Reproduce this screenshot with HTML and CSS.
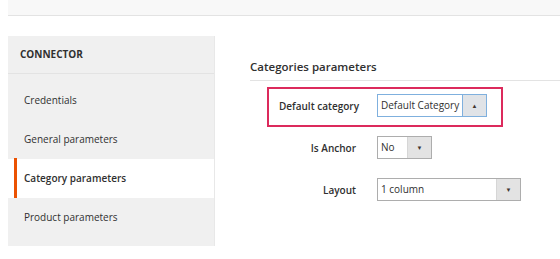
FILE: index.html
```html
<!DOCTYPE html>
<html lang="en">
<head>
    <meta charset="UTF-8">
    <meta name="viewport" content="width=device-width, initial-scale=1.0">
    <title>Connector - Categories parameters</title>
    <link rel="stylesheet" href="styles.css">
</head>
<body>
    <div class="page-top"></div>

    <div class="page-main">
        <nav class="side-nav">
            <div class="side-nav-title">CONNECTOR</div>
            <ul class="side-nav-list">
                <li class="side-nav-item">Credentials</li>
                <li class="side-nav-item">General parameters</li>
                <li class="side-nav-item active">Category parameters</li>
                <li class="side-nav-item">Product parameters</li>
            </ul>
        </nav>

        <section class="config">
            <h2 class="config-title">Categories parameters</h2>

            <div class="field-list">
                <div class="field highlight">
                    <label class="field-label">Default category</label>
                    <div class="select select-md open">
                        <span class="select-value">Default Category</span>
                        <span class="select-toggle">&#9650;</span>
                    </div>
                </div>

                <div class="field">
                    <label class="field-label">Is Anchor</label>
                    <div class="select select-sm">
                        <span class="select-value">No</span>
                        <span class="select-toggle">&#9660;</span>
                    </div>
                </div>

                <div class="field">
                    <label class="field-label">Layout</label>
                    <div class="select select-lg">
                        <span class="select-value">1 column</span>
                        <span class="select-toggle">&#9660;</span>
                    </div>
                </div>
            </div>
        </section>
    </div>
</body>
</html>
```

FILE: styles.css
```css
* {
    margin: 0;
    padding: 0;
    box-sizing: border-box;
}

body {
    margin: 0 0 0 8px;
    font-family: "Open Sans", "Liberation Sans", sans-serif;
    font-size: 10px;
    color: #303030;
    background: #fff;
}

.page-top {
    height: 16px;
    background: #f8f8f8;
    border-bottom: 1px solid #e3e3e3;
}

.page-main {
    display: flex;
    align-items: flex-start;
    margin-top: 20px;
}

/* left navigation */
.side-nav {
    width: 207px;
    flex-shrink: 0;
    background: #f0f0f0;
    border-right: 1px solid #e8e8e8;
}

.side-nav-title {
    height: 38px;
    line-height: 36px;
    padding-left: 12px;
    font-weight: 700;
    color: #303030;
    border-bottom: 1px solid #e3e3e3;
}

.side-nav-list {
    list-style: none;
    padding: 7px 0 9px;
}

.side-nav-item {
    position: relative;
    height: 39px;
    line-height: 39px;
    padding-left: 16px;
    color: #303030;
}

.side-nav-item.active {
    background: #fff;
    font-weight: 600;
}

.side-nav-item.active::before {
    content: "";
    position: absolute;
    left: 6px;
    top: -1px;
    bottom: 0;
    width: 3px;
    background: #eb5202;
}

/* configuration panel */
.config {
    flex: 1;
    margin-left: 35px;
}

.config-title {
    font-size: 11.5px;
    font-weight: 600;
    color: #303030;
    line-height: 16px;
    padding: 23px 0 5px;
    border-bottom: 1px solid #e3e3e3;
}

.field-list {
    margin: 6px 0 0 17px;
    display: flex;
    flex-direction: column;
    gap: 2px;
    align-items: flex-start;
}

.field {
    display: flex;
    align-items: center;
    gap: 21px;
    padding: 5px 14px 8px 10px;
    border: 2px solid transparent;
}

.field.highlight {
    border-color: #dc2a5c;
}

.field-label {
    width: 77px;
    text-align: right;
    font-weight: 600;
    color: #303030;
    white-space: nowrap;
}

.select {
    display: flex;
    height: 23px;
    border: 1px solid #adadad;
    background: #fff;
}

.select-sm { width: 55px; }
.select-md { width: 110px; }
.select-lg { width: 144px; }

.select-value {
    flex: 1;
    line-height: 21px;
    padding-left: 3px;
    white-space: nowrap;
    overflow: hidden;
}

.select-toggle {
    width: 24px;
    display: flex;
    align-items: center;
    justify-content: center;
    background: #e3e3e3;
    border-left: 1px solid #d6d6d6;
    font-size: 6px;
    color: #41362f;
}

.select.open {
    border-color: #7fb0de;
}

.select.open .select-toggle {
    border-left-color: #7fb0de;
    background: #e0e3e7;
}
```
